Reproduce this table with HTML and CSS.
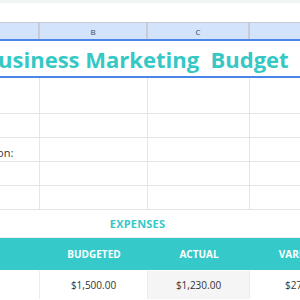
FILE: index.html
```html
<!DOCTYPE html>
<html>
<head>
<meta charset="utf-8">
<link rel="stylesheet" href="styles.css">
</head>
<body>
<div class="sheet">
  <div class="topstrip"></div>
  <div class="gap"></div>
  <div class="row colhead">
    <div class="cell">A</div>
    <div class="cell">B</div>
    <div class="cell">C</div>
    <div class="cell">D</div>
  </div>
  <div class="title">Business Marketing  Budget</div>
  <div class="row grid r1">
    <div class="cell"></div><div class="cell"></div><div class="cell"></div><div class="cell"></div>
  </div>
  <div class="row grid">
    <div class="cell"></div><div class="cell"></div><div class="cell"></div><div class="cell"></div>
  </div>
  <div class="row grid">
    <div class="cell label">Duration:</div><div class="cell"></div><div class="cell"></div><div class="cell"></div>
  </div>
  <div class="row grid">
    <div class="cell"></div><div class="cell"></div><div class="cell"></div><div class="cell"></div>
  </div>
  <div class="row grid">
    <div class="cell"></div><div class="cell"></div><div class="cell"></div><div class="cell"></div>
  </div>
  <div class="section">EXPENSES</div>
  <div class="row thead">
    <div class="cell"></div>
    <div class="cell">BUDGETED</div>
    <div class="cell">ACTUAL</div>
    <div class="cell">VARIANCE</div>
  </div>
  <div class="row data">
    <div class="cell"></div>
    <div class="cell">$1,500.00</div>
    <div class="cell actual">$1,230.00</div>
    <div class="cell">$270.00</div>
  </div>
</div>
</body>
</html>
```

FILE: styles.css
```css
html, body {
  margin: 0;
  padding: 0;
  background: #ffffff;
  overflow: hidden;
  width: 300px;
  height: 300px;
}
.sheet {
  width: 441px;
  margin-left: -83px;
  font-family: "Open Sans", "Liberation Sans", sans-serif;
  color: #333333;
}
.topstrip {
  height: 3px;
  background: #f1f4f4;
}
.gap {
  height: 19px;
}
.row {
  display: grid;
  grid-template-columns: 123px 108px 102px 108px;
}
.colhead {
  height: 16px;
  border-top: 1px solid #c9cdd3;
  background: #d3e3fb;
  font-size: 8px;
  color: #3c4a5e;
}
.colhead .cell {
  display: flex;
  align-items: center;
  justify-content: center;
  border-right: 2px solid #c5ccd8;
  box-sizing: border-box;
}
.title {
  height: 35px;
  border-top: 2px solid #4a86e8;
  border-bottom: 2px solid #4a86e8;
  display: flex;
  align-items: center;
  justify-content: center;
  white-space: pre;
  font-size: 22px;
  font-weight: 700;
  color: #35c8c4;
  padding-right: 3px;
}
.grid {
  height: 23px;
  border-bottom: 1px solid #e4e4e4;
}
.grid.r1 {
  height: 35px;
}
.grid .cell {
  border-right: 1px solid #e4e4e4;
  box-sizing: border-box;
}
.label {
  font-size: 11px;
  display: flex;
  align-items: flex-end;
  padding-left: 48px;
  padding-bottom: 1px;
}
.section {
  height: 27px;
  border-bottom: 1px solid #efefef;
  display: flex;
  align-items: center;
  justify-content: center;
  font-size: 11px;
  font-weight: 700;
  color: #35c8c8;
  letter-spacing: 0.2px;
}
.thead {
  height: 32px;
  background: #35c9c9;
  color: #ffffff;
  font-size: 10px;
  font-weight: 700;
}
.thead .cell, .data .cell {
  display: flex;
  align-items: center;
  justify-content: center;
}
.data {
  height: 28px;
  margin-top: 1px;
  font-size: 10px;
}
.data .cell {
  border-right: 1px solid #ececec;
  box-sizing: border-box;
}
.data .actual {
  background: #f5f5f5;
}
```
